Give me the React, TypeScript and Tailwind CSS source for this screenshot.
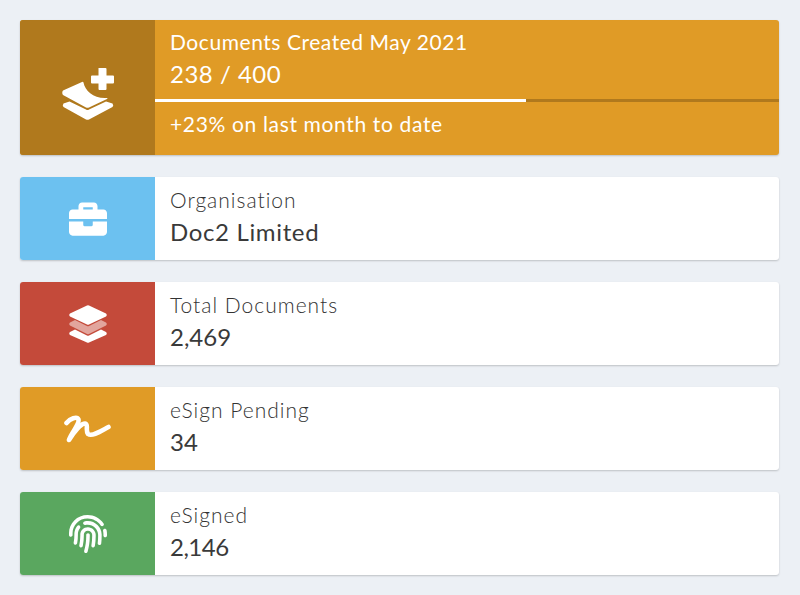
import React from "react";
import { FaBriefcase, FaFingerprint } from "react-icons/fa";

const LayerPlus = () => (
  <svg width="52" height="52" viewBox="0 0 52 52" fill="#fff">
    <path d="M1 22.500 L20 14 Q21 13.500 21.500 14.500 C23 23 32 31 45 30 Q46 30.500 45 31 L27 39.500 Q25.500 40 24 39.500 L1 27 Q-0.500 24.500 1 22.500 Z" />
    <path d="M1.500 35.500 L7.500 33.500 L24 41.500 Q25.500 42.500 27 41.500 L44 33.500 L50.500 35.500 Q52 37.500 50.500 39 L27 51.500 Q25.500 52 24 51.500 L1.500 39 Q0 37.500 1.500 35.500 Z" />
    <path d="M36.500 0 H43.500 Q44.500 0 44.500 1 V7.500 H51 Q52 7.500 52 8.500 V14.500 Q52 15.500 51 15.500 H44.500 V21 Q44.500 22 43.500 22 H37.500 Q36.500 22 36.500 21 V15.500 H30 Q29 15.500 29 14.500 V8.500 Q29 7.500 30 7.500 H36.500 Z" />
  </svg>
);

const Layers = () => (
  <svg width="38" height="38" viewBox="0 0 38 38" fill="#fff">
    <path opacity="0.5" d="M6 15 L1 17.500 Q-0.500 19 1 20.500 L18 29 Q19 29.500 20 29 L37 20.500 Q38.500 19 37 17.500 L32 15 L20 21 Q19 21.500 18 21 Z" />
    <path d="M18 0.500 Q19 0 20 0.500 L37 8.500 Q38.500 10 37 11.500 L20 19.500 Q19 20 18 19.500 L1 11.500 Q-0.500 10 1 8.500 Z" />
    <path d="M6 24.500 L1 27 Q-0.500 28.500 1 30 L18 37.500 Q19 38 20 37.500 L37 30 Q38.500 28.500 37 27 L32 24.500 L20 30.500 Q19 31 18 30.500 Z" />
  </svg>
);

const Signature = () => (
  <svg width="47" height="28" viewBox="0 0 47 28" fill="none" stroke="#fff" strokeLinecap="round" strokeLinejoin="round">
    <path strokeWidth="4.600" d="M2.500 8 C6 3.500 13 1 14.500 4.500 C16 9 7 18 5 25 C10 17 17 8.500 21 8.500 C25 9 21 15 24 19 C28 22 37 16 44.500 12" />
  </svg>
);

type Item = { color: string; label: string; value: string; track: string; icon: React.ReactNode };

const items: Item[] = [
  { color: "bg-[#6cc1f0]", label: "Organisation", value: "Doc2 Limited", track: "tracking-[0.65px]", icon: <FaBriefcase size={38} color="#fff" /> },
  { color: "bg-[#c44a3a]", label: "Total Documents", value: "2,469", track: "tracking-[0px]", icon: <Layers /> },
  { color: "bg-[#e09b26]", label: "eSign Pending", value: "34", track: "tracking-[0px]", icon: <Signature /> },
  { color: "bg-[#5aa75f]", label: "eSigned", value: "2,146", track: "tracking-[-0.5px]", icon: <FaFingerprint size={38} color="#fff" /> },
];

export default function App() {
  return (
    <div className="min-h-[595px] bg-[#ecf0f5] pl-5 pr-[21px] pt-5 flex flex-col gap-[22px] font-['Lato','Noto_Sans',sans-serif]">
      <div className="flex h-[135px] rounded-[3px] overflow-hidden bg-[#e09b26] text-white shadow-[0_1px_2px_rgba(0,0,0,0.2)]">
        <div className="w-[135px] shrink-0 bg-[#b0791d] flex items-center justify-center pt-[13px]">
          <LayerPlus />
        </div>
        <div className="flex-1 flex flex-col pt-[10px]">
          <div className="px-[15px] text-[21px] leading-[26px] font-normal tracking-[0.55px] whitespace-nowrap -translate-y-px">Documents Created May 2021</div>
          <div className="px-[15px] mt-[3px] text-[24px] leading-[30px] font-normal tracking-[0.5px]">238 / 400</div>
          <div className="mt-[10px] h-[3px] bg-[#b0791d]">
            <div className="h-full w-[371px] bg-white" />
          </div>
          <div className="px-[15px] mt-[9px] text-[21px] leading-[26px] font-normal tracking-[0.65px] whitespace-nowrap">+23% on last month to date</div>
        </div>
      </div>
      {items.map((it) => (
        <div key={it.label} className="flex h-[83px] rounded-[3px] overflow-hidden bg-white shadow-[0_1px_2px_rgba(0,0,0,0.2)]">
          <div className={`w-[135px] shrink-0 ${it.color} flex items-center justify-center`}>{it.icon}</div>
          <div className="flex-1 flex flex-col pl-[15px] pt-[10px] text-[#333]">
            <div className="text-[21px] leading-[26px] font-light tracking-[1px] text-[#333] whitespace-nowrap">{it.label}</div>
            <div className={`mt-[4px] text-[24px] leading-[30px] font-normal ${it.track} text-[#3a3a3a] whitespace-nowrap`}>{it.value}</div>
          </div>
        </div>
      ))}
    </div>
  );
}
